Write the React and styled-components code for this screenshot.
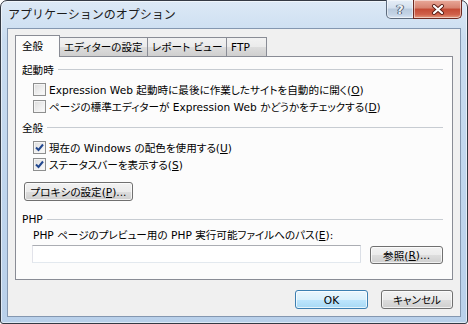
import React from 'react';
import styled, { createGlobalStyle } from 'styled-components';

const GlobalStyle = createGlobalStyle`
  body {
    margin: 0;
    overflow: hidden;
    background: #fff;
  }
`;

const UI_FONT = `"DejaVu Sans", "Noto Sans CJK JP", sans-serif`;
const TEXT_SIZE = '10.6px';

const Window = styled.div`
  width: 468px;
  height: 324px;
  box-sizing: border-box;
  border: 1px solid #343a44;
  border-radius: 7px 7px 3px 3px;
  background: linear-gradient(180deg, #dce9f6 0%, #c9dcf0 12%, #bfd5ed 60%, #b9d0ea 100%);
  box-shadow: inset 0 0 0 1px rgba(255, 255, 255, 0.55);
  display: flex;
  flex-direction: column;
  font-family: ${UI_FONT};
  color: #000;
`;

const TitleBar = styled.div`
  height: 27px;
  display: flex;
  align-items: flex-start;
  padding: 0 5px 0 7px;
`;

const Title = styled.div`
  flex: 1;
  font-family: "Noto Sans CJK JP", sans-serif;
  font-size: 12px;
  line-height: 26px;
  color: #1b1b1b;
`;

const CaptionButtons = styled.div`
  display: flex;
  margin-top: -1px;
`;

const CaptionButton = styled.div`
  width: ${p => p.$w}px;
  height: 19px;
  box-sizing: border-box;
  border: 1px solid ${p => (p.$close ? '#6e2a22' : '#5d6b7d')};
  border-top: none;
  border-radius: ${p => (p.$close ? '0 0 5px 0' : '0 0 0 5px')};
  margin-left: ${p => (p.$close ? '-1px' : '0')};
  background: ${p =>
    p.$close
      ? 'linear-gradient(180deg, #e9a99a 0%, #d7826f 45%, #c44a34 50%, #d0604a 80%, #e39b7f 100%)'
      : 'linear-gradient(180deg, #e6eef7 0%, #d4e0ee 45%, #b9cadd 50%, #c4d4e6 80%, #d9e5f2 100%)'};
  box-shadow: inset 0 0 0 1px rgba(255, 255, 255, 0.5);
  display: flex;
  align-items: center;
  justify-content: center;
`;

const HelpGlyph = styled.span`
  font-family: "DejaVu Sans", sans-serif;
  font-weight: bold;
  font-size: 13px;
  line-height: 1;
  color: #eef2f7;
  text-shadow: 0 0 1px #3d4d63, 0 0 1px #3d4d63, 1px 0 0 #5a6a80, -1px 0 0 #5a6a80;
`;

const Client = styled.div`
  flex: 1;
  margin: 0 6px 6px;
  border: 1px solid #8497b0;
  background: #f0f0f0;
  padding: 6px 7px 7px;
  display: flex;
  flex-direction: column;
  font-size: ${TEXT_SIZE};
  font-feature-settings: "palt";
`;

const TabRow = styled.div`
  display: flex;
  align-items: flex-end;
  height: 22px;
  margin-bottom: -1px;
  position: relative;
  z-index: 1;
`;

const Tab = styled.div`
  width: ${p => p.$w}px;
  height: ${p => (p.$active ? 22 : 20)}px;
  box-sizing: border-box;
  border: 1px solid #898c95;
  border-bottom: ${p => (p.$active ? 'none' : '1px solid #898c95')};
  margin-left: ${p => (p.$first ? 0 : -1)}px;
  background: ${p =>
    p.$active ? '#fcfcfc' : 'linear-gradient(180deg, #f2f2f2 0%, #ebebeb 50%, #dddddd 51%, #cfcfcf 100%)'};
  line-height: ${p => (p.$active ? 20 : 18)}px;
  padding-left: ${p => (p.$active ? 6 : 4)}px;
  white-space: nowrap;
`;

const Panel = styled.div`
  height: 224px;
  box-sizing: border-box;
  border: 1px solid #898c95;
  background: #fcfcfc;
  padding: 4px 9px 0 6px;
  display: flex;
  flex-direction: column;
`;

const SectionHeader = styled.div`
  display: flex;
  align-items: center;
  height: 16px;
  margin-top: ${p => p.$gap || 0}px;
  white-space: nowrap;

  &::after {
    content: '';
    flex: 1;
    height: 1px;
    margin-left: 4px;
    background: #c7ccd2;
  }
`;

const CheckRow = styled.label`
  display: flex;
  align-items: center;
  height: 17px;
  margin-top: ${p => p.$gap || 0}px;
  padding-left: 11px;
  white-space: nowrap;
`;

const Box = styled.span`
  width: 13px;
  height: 13px;
  box-sizing: border-box;
  border: 1px solid #8e8f8f;
  margin-right: 3px;
  background: linear-gradient(135deg, #dcdcdc 0%, #f0f0f0 60%, #fbfbfb 100%);
  box-shadow: inset 0 0 0 1px #f4f4f4;
  display: flex;
  align-items: center;
  justify-content: center;
`;

const Underline = styled.span`
  text-decoration: underline;
`;

const Button = styled.div`
  width: ${p => p.$w}px;
  height: ${p => p.$h || 19}px;
  box-sizing: border-box;
  border: 1px solid ${p => (p.$default ? '#3c7fb1' : '#707070')};
  border-radius: 3px;
  background: ${p =>
    p.$default
      ? 'linear-gradient(180deg, #eaf6fd 0%, #d9f0fc 50%, #bee6fd 51%, #a7d9f5 100%)'
      : 'linear-gradient(180deg, #f2f2f2 0%, #ebebeb 50%, #dddddd 51%, #cfcfcf 100%)'};
  box-shadow: inset 0 0 0 1px rgba(255, 255, 255, 0.7);
  display: flex;
  align-items: center;
  justify-content: center;
  white-space: nowrap;
  margin-left: ${p => p.$ml || 0}px;
  margin-top: ${p => p.$mt || 0}px;
`;

const FieldLabel = styled.div`
  height: 16px;
  line-height: 16px;
  padding-left: 11px;
  white-space: nowrap;
`;

const FieldRow = styled.div`
  display: flex;
  align-items: flex-start;
  margin-top: 2px;
  padding-left: 10px;
`;

const TextInput = styled.div`
  width: 330px;
  height: 18px;
  box-sizing: border-box;
  border: 1px solid #abadb3;
  border-left-color: #e2e3ea;
  border-right-color: #dbdfe6;
  border-bottom-color: #e3e9ef;
  background: #fff;
`;

const Footer = styled.div`
  display: flex;
  justify-content: flex-end;
  margin-top: 10px;
  gap: 13px;
`;

const Check = () => (
  <svg width="9" height="9" viewBox="0 0 9 9">
    <path d="M1 4.5 L3.5 7 L8 1.5" fill="none" stroke="#21478f" strokeWidth="2" />
  </svg>
);

const CheckItem = ({ checked, gap, children }) => (
  <CheckRow $gap={gap}>
    <Box>{checked && <Check />}</Box>
    <span>{children}</span>
  </CheckRow>
);

const CloseGlyph = () => (
  <svg width="14" height="11" viewBox="0 0 14 11">
    <path d="M3 2 L11 9 M11 2 L3 9" stroke="#5a1c14" strokeWidth="4" strokeLinecap="round" />
    <path d="M3 2 L11 9 M11 2 L3 9" stroke="#ffffff" strokeWidth="2.2" strokeLinecap="round" />
  </svg>
);

export default function App() {
  return (
    <>
      <GlobalStyle />
      <Window>
        <TitleBar>
          <Title>アプリケーションのオプション</Title>
          <CaptionButtons>
            <CaptionButton $w={28}>
              <HelpGlyph>?</HelpGlyph>
            </CaptionButton>
            <CaptionButton $w={49} $close>
              <CloseGlyph />
            </CaptionButton>
          </CaptionButtons>
        </TitleBar>
        <Client>
          <TabRow>
            <Tab $w={45} $active $first>全般</Tab>
            <Tab $w={89}>エディターの設定</Tab>
            <Tab $w={80}>レポート ビュー</Tab>
            <Tab $w={41}>FTP</Tab>
          </TabRow>
          <Panel>
            <SectionHeader>起動時</SectionHeader>
            <CheckItem gap={4}>
              Expression Web 起動時に最後に作業したサイトを自動的に開く(<Underline>O</Underline>)
            </CheckItem>
            <CheckItem>
              ページの標準エディターが Expression Web かどうかをチェックする(<Underline>D</Underline>)
            </CheckItem>
            <SectionHeader $gap={4}>全般</SectionHeader>
            <CheckItem gap={4} checked>
              現在の Windows の配色を使用する(<Underline>U</Underline>)
            </CheckItem>
            <CheckItem checked>
              ステータスバーを表示する(<Underline>S</Underline>)
            </CheckItem>
            <Button $w={109} $ml={2} $mt={9}>
              プロキシの設定(<Underline>P</Underline>)...
            </Button>
            <SectionHeader $gap={10}>PHP</SectionHeader>
            <FieldLabel>
              PHP ページのプレビュー用の PHP 実行可能ファイルへのパス(<Underline>E</Underline>):
            </FieldLabel>
            <FieldRow>
              <TextInput />
              <Button $w={73} $h={18} $ml={9} $mt={1}>
                参照(<Underline>R</Underline>)...
              </Button>
            </FieldRow>
          </Panel>
          <Footer>
            <Button $w={73} $default>OK</Button>
            <Button $w={72}>キャンセル</Button>
          </Footer>
        </Client>
      </Window>
    </>
  );
}
